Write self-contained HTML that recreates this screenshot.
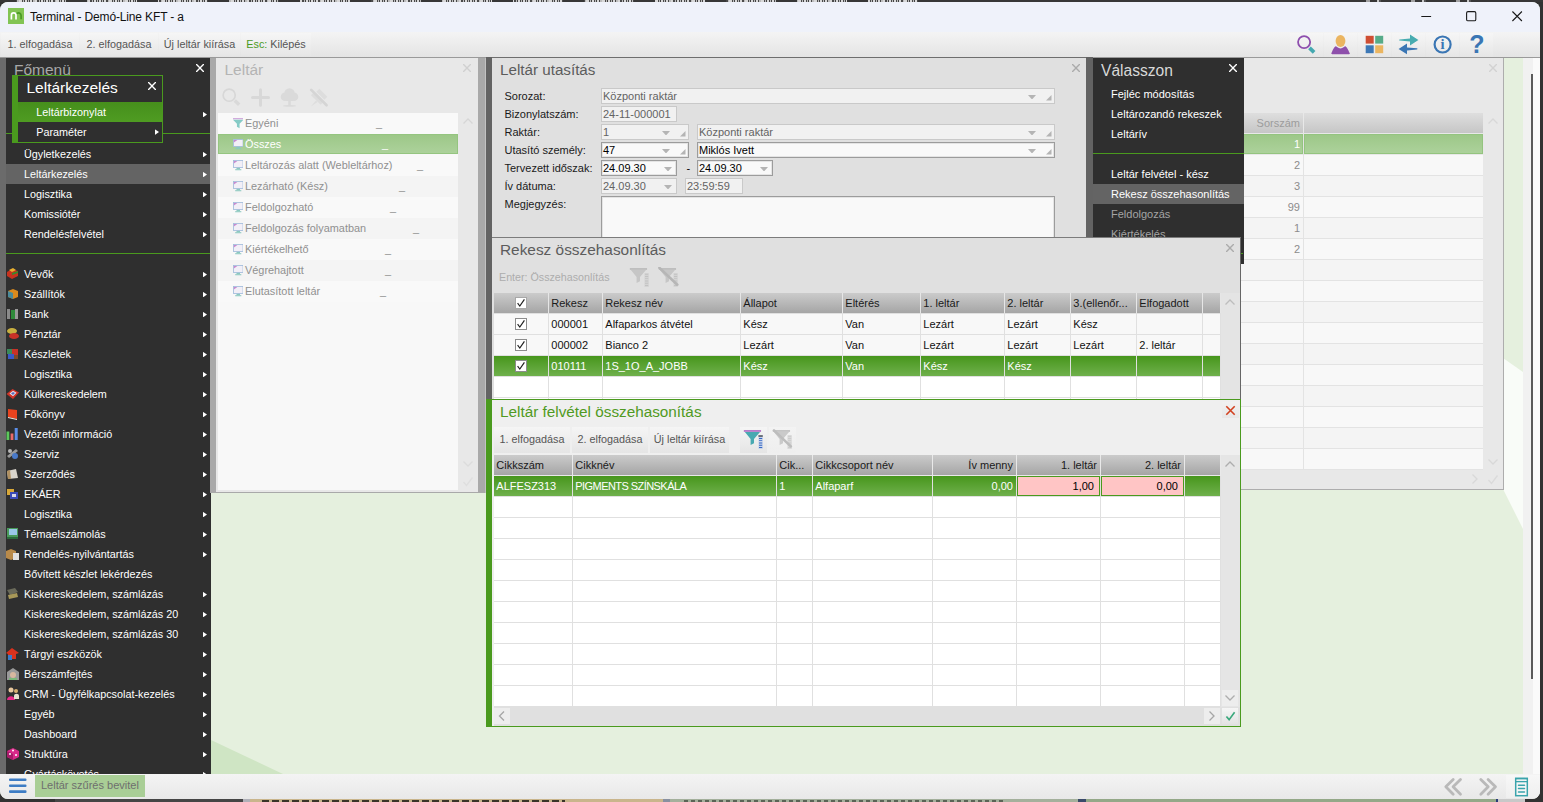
<!DOCTYPE html>
<html lang="hu"><head><meta charset="utf-8"><title>Terminal - Demó-Line KFT - a</title>
<style>
*{box-sizing:border-box;margin:0;padding:0}
html,body{width:1543px;height:802px;overflow:hidden;background:#323232}
body{font-family:"Liberation Sans",Arial,sans-serif;font-size:11px;color:#000;position:relative}
.a{position:absolute}
#win{position:absolute;left:0;top:2px;width:1540px;height:796.800px;border-radius:8px;overflow:hidden;background:#e5f0de}
#m{position:absolute;left:0;top:-2px;width:1543px;height:802px}
#title{left:0;top:2px;width:1540px;height:30px;background:#eff2fa}
#title .t{left:30px;top:7px;font-size:12px;letter-spacing:-0.14px;color:#111;white-space:nowrap;line-height:16px}
#tb{left:0;top:32px;width:1540px;height:25px;background:linear-gradient(#f4f4f4,#e4e4e4)}
#tbline{left:0;top:57px;width:1540px;height:1px;background:#9a9a9a}
.tbtn{position:absolute;top:1px;height:23px;line-height:23px;font-size:10.8px;color:#555;background:linear-gradient(#f6f6f6,#e6e6e6);text-align:center;white-space:nowrap}
.tbtn b{font-weight:normal;color:#4a9a1e}
.mi{position:absolute;left:6px;width:204px;height:20px;line-height:20px;font-size:10.8px;color:#fff;padding-left:18px;white-space:nowrap}
.mi:after{content:"";position:absolute;right:3px;top:7.7px;width:4.2px;height:5.8px;background:#fff;clip-path:polygon(0 0,100% 50%,0 100%)}
.mi.na:after{display:none}
.mi.hl{background:#646464}
.pt{position:absolute;font-size:15.5px;white-space:nowrap;line-height:18px}
.x{position:absolute;width:8.8px;height:8.8px;margin:0.1px;background:currentColor;clip-path:polygon(11% 0,50% 39%,89% 0,100% 11%,61% 50%,100% 89%,89% 100%,50% 61%,11% 100%,0 89%,39% 50%,0 11%)}
</style></head><body>
<div class="a" style="left:0;top:0;width:1543px;height:2px;background:#373737"></div>
<div class="a" style="left:14px;top:0.300px;width:920px;height:1.700px;background:repeating-linear-gradient(90deg,#373737 0,#373737 2px,transparent 2px,transparent 52px,#373737 52px,#373737 71px),repeating-linear-gradient(90deg,#d8d8d8 0,#d8d8d8 2.200px,#4a4a4a 2.200px,#4a4a4a 3.400px,#bcbcbc 3.400px,#bcbcbc 4.600px,#444 4.600px,#444 5.300px)"></div>
<div class="a" style="left:1336px;top:0.300px;width:160px;height:1.700px;background:repeating-linear-gradient(90deg,#373737 0,#373737 30px,#a0a0a0 30px,#a0a0a0 34px,#373737 34px,#373737 41px,#c8c8c8 41px,#c8c8c8 43px,#555 43px,#555 45px)"></div>
<div class="a" style="left:55px;top:798px;width:188px;height:4px;background:#454545"></div>
<div class="a" style="left:243px;top:798px;width:7px;height:4px;background:#b0b0b8"></div>
<div class="a" style="left:250px;top:798px;width:413px;height:4px;background:#c9b58c"></div>
<div class="a" style="left:262px;top:799.5px;width:303px;height:2.5px;background:repeating-linear-gradient(90deg,#3a3428 0,#3a3428 7px,#c9b58c 7px,#c9b58c 10px)"></div>
<div class="a" style="left:663px;top:798px;width:7px;height:4px;background:#8890a0"></div>
<div class="a" style="left:670px;top:798px;width:408px;height:4px;background:#a4b09c"></div>
<div class="a" style="left:684px;top:800px;width:320px;height:2px;background:repeating-linear-gradient(90deg,#5a6456 0,#5a6456 4px,#a4b09c 4px,#a4b09c 7px)"></div>
<div class="a" style="left:1078px;top:798px;width:8px;height:4px;background:#3a4a6a"></div>
<div class="a" style="left:1086px;top:798px;width:410px;height:4px;background:#94a888"></div>
<div class="a" style="left:1496px;top:798px;width:1.500px;height:4px;background:#2a3a7a"></div>
<div class="a" style="left:1497.500px;top:798px;width:27px;height:4px;background:#c8c8c8"></div>
<div id="win"><div id="m">
<div id="title" class="a"><div class="a t">Terminal - Demó-Line KFT - a</div></div>
<div id="tb" class="a">
<div class="tbtn" style="left:1px;width:78px">1. elfogadása</div>
<div class="tbtn" style="left:80px;width:78px">2. elfogadása</div>
<div class="tbtn" style="left:159px;width:81px">Új leltár kiírása</div>
<div class="tbtn" style="left:241px;width:70px"><b>Esc:</b> Kilépés</div>
</div>
<div class="a" style="left:1290px;top:33px;width:33px;height:23.500px;background:linear-gradient(#f6f6f6,#e6e6e6)"></div>
<div class="a" style="left:1324px;top:33px;width:33px;height:23.500px;background:linear-gradient(#f6f6f6,#e6e6e6)"></div>
<div class="a" style="left:1358px;top:33px;width:33px;height:23.500px;background:linear-gradient(#f6f6f6,#e6e6e6)"></div>
<div class="a" style="left:1392px;top:33px;width:33px;height:23.500px;background:linear-gradient(#f6f6f6,#e6e6e6)"></div>
<div class="a" style="left:1426px;top:33px;width:33px;height:23.500px;background:linear-gradient(#f6f6f6,#e6e6e6)"></div>
<div class="a" style="left:1460px;top:33px;width:33px;height:23.500px;background:linear-gradient(#f6f6f6,#e6e6e6)"></div>
<svg class="a" style="left:1290px;top:33px" width="33" height="24" viewBox="1290 33 33 24"><circle cx="1304.100" cy="42.100" r="6.050" fill="none" stroke="#8e4fae" stroke-width="1.800"/><path d="M1309.500 47.800l4.600 4.500" stroke="#44a8b0" stroke-width="3.800" stroke-linecap="butt"/><path d="M1309.100 46.800l5.900 5.500-2.500 2.600-5.500-5.900z" fill="#44a8b0" opacity="0"/></svg>
<svg class="a" style="left:1324px;top:33px" width="33" height="24" viewBox="1324 33 33 24"><path d="M1331.300 53.600c0.300-1.200 2.200-6 4.200-7.400 1 0 2.500 2.200 5 2.200s4-2.200 5-2.200c2 1.400 3.900 6.200 4.400 7.400-0.200 0.400-0.500 0.600-0.900 0.600h-16.800c-0.400 0-0.800-0.200-0.900-0.600z" fill="#8e50ab"/><ellipse cx="1340.500" cy="41" rx="4.900" ry="6.050" fill="#ebb560"/></svg>
<svg class="a" style="left:1358px;top:33px" width="33" height="24" viewBox="1358 33 33 24"><rect x="1365.700" y="35.800" width="8" height="7.800" fill="#cf4e32"/><rect x="1375.200" y="35.800" width="8" height="7.800" fill="#56ab88"/><rect x="1365.700" y="45.300" width="8" height="7.900" fill="#3d78b6"/><rect x="1375.200" y="45.300" width="8" height="7.900" fill="#ebb560"/></svg>
<svg class="a" style="left:1392px;top:33px" width="33" height="24" viewBox="1392 33 33 24"><path d="M1399.600 39.400l10.400-0.900v-3.900l8.400 5.400-8.400 5.400v-3.900l-10.400-0.900c-0.600-0.300-0.600-0.900 0-1.200z" fill="#48acb0"/><path d="M1417 48.300l-10 -0.900v-3.900l-8.400 5.400 8.400 5.400v-3.900l10-0.900c0.600-0.300 0.600-0.900 0-1.200z" fill="#3a76b4"/></svg>
<svg class="a" style="left:1426px;top:33px" width="33" height="24" viewBox="1426 33 33 24"><circle cx="1442.600" cy="44.500" r="8" fill="none" stroke="#3a76b4" stroke-width="2.200"/><text x="1442.600" y="49.300" text-anchor="middle" font-family="Liberation Serif, serif" font-weight="bold" font-size="14.500" fill="#3a76b4">i</text></svg>
<svg class="a" style="left:1460px;top:33px" width="33" height="24" viewBox="1460 33 33 24"><text transform="translate(1476.800 53.400) scale(1 1)" text-anchor="middle" font-family="Liberation Sans, sans-serif" font-weight="bold" font-size="25" fill="#3a76b4">?</text></svg>
<svg class="a" style="left:8px;top:8px" width="16" height="16" viewBox="0 0 16 16"><rect width="16" height="16" fill="#82c454"/><path d="M3.400 11.500v-4.300c0-3 4.600-3 4.600 0v4.300" fill="none" stroke="#fff" stroke-width="1.700"/><path d="M8.700 5.600c2.400-1.600 4.400-0.300 4.400 2v3.600" fill="none" stroke="#4a9a24" stroke-width="1.700"/></svg>
<svg class="a" style="left:1415px;top:6px" width="115" height="22" viewBox="1415 6 115 22" fill="none" stroke="#1a1a1a" stroke-width="1.100"><path d="M1421.300 16.500h9.800"/><rect x="1466.600" y="11.600" width="9.200" height="9.200" rx="1.400"/><path d="M1512.400 11.500l9.500 9.500M1521.900 11.500l-9.500 9.500"/></svg>
<div id="tbline" class="a"></div>
<svg class="a" style="left:0;top:58px" width="1540" height="716" viewBox="0 58 1540 716"><path d="M211 740v34h72z" fill="#cfe5c4"/><path d="M1503 358l20 14v157l-20-40z" fill="#f9fcf8"/></svg>
<div class="a" style="left:1523px;top:58px;width:17px;height:716px;background:#f1f1f1"></div>
<div class="a" style="left:1533px;top:58px;width:7px;height:716px;background:#fafafa"></div>
<div class="a" style="left:1531px;top:74px;width:2px;height:605px;background:#5a5a5a"></div>
<div class="a" style="left:1236px;top:58px;width:268px;height:431.5px;background:#e8e8e8;border-right:1px solid #adadad;border-bottom:1px solid #adadad;overflow:hidden">
<div class="x" style="left:252.5px;top:5.5px;color:#d2d2d2"></div>
<div class="a" style="left:0px;top:55px;width:67px;height:20px;background:linear-gradient(#dedede,#c6c6c6);line-height:20px;text-align:right;padding-right:3px;color:#9c9c9c">Sorszám</div>
<div class="a" style="left:68px;top:55px;width:179px;height:20px;background:linear-gradient(#dedede,#c6c6c6)"></div>
<div class="a" style="left:0px;top:76px;width:67px;height:20px;background:linear-gradient(#9cc787,#add29c);color:#fff;box-shadow:inset 0 0 0 1px #94c47f;line-height:20px;text-align:right;padding-right:3px">1</div>
<div class="a" style="left:68px;top:76px;width:179px;height:20px;background:linear-gradient(#9cc787,#add29c);color:#fff;box-shadow:inset 0 0 0 1px #94c47f"></div>
<div class="a" style="left:0px;top:97px;width:67px;height:21px;background:#f8f8f8;color:#8c8c8c;border-bottom:1px solid #e3e3e3;line-height:21px;text-align:right;padding-right:3px">2</div>
<div class="a" style="left:68px;top:97px;width:179px;height:21px;background:#f8f8f8;color:#8c8c8c;border-bottom:1px solid #e3e3e3"></div>
<div class="a" style="left:0px;top:118px;width:67px;height:21px;background:#f4f4f4;color:#8c8c8c;border-bottom:1px solid #e3e3e3;line-height:21px;text-align:right;padding-right:3px">3</div>
<div class="a" style="left:68px;top:118px;width:179px;height:21px;background:#f4f4f4;color:#8c8c8c;border-bottom:1px solid #e3e3e3"></div>
<div class="a" style="left:0px;top:139px;width:67px;height:21px;background:#f8f8f8;color:#8c8c8c;border-bottom:1px solid #e3e3e3;line-height:21px;text-align:right;padding-right:3px">99</div>
<div class="a" style="left:68px;top:139px;width:179px;height:21px;background:#f8f8f8;color:#8c8c8c;border-bottom:1px solid #e3e3e3"></div>
<div class="a" style="left:0px;top:160px;width:67px;height:21px;background:#f4f4f4;color:#8c8c8c;border-bottom:1px solid #e3e3e3;line-height:21px;text-align:right;padding-right:3px">1</div>
<div class="a" style="left:68px;top:160px;width:179px;height:21px;background:#f4f4f4;color:#8c8c8c;border-bottom:1px solid #e3e3e3"></div>
<div class="a" style="left:0px;top:181px;width:67px;height:21px;background:#f8f8f8;color:#8c8c8c;border-bottom:1px solid #e3e3e3;line-height:21px;text-align:right;padding-right:3px">2</div>
<div class="a" style="left:68px;top:181px;width:179px;height:21px;background:#f8f8f8;color:#8c8c8c;border-bottom:1px solid #e3e3e3"></div>
<div class="a" style="left:0px;top:202px;width:67px;height:21px;background:#f4f4f4;color:#8c8c8c;border-bottom:1px solid #e3e3e3;line-height:21px;text-align:right;padding-right:3px"></div>
<div class="a" style="left:68px;top:202px;width:179px;height:21px;background:#f4f4f4;color:#8c8c8c;border-bottom:1px solid #e3e3e3"></div>
<div class="a" style="left:0px;top:223px;width:67px;height:21px;background:#f8f8f8;color:#8c8c8c;border-bottom:1px solid #e3e3e3;line-height:21px;text-align:right;padding-right:3px"></div>
<div class="a" style="left:68px;top:223px;width:179px;height:21px;background:#f8f8f8;color:#8c8c8c;border-bottom:1px solid #e3e3e3"></div>
<div class="a" style="left:0px;top:244px;width:67px;height:21px;background:#f4f4f4;color:#8c8c8c;border-bottom:1px solid #e3e3e3;line-height:21px;text-align:right;padding-right:3px"></div>
<div class="a" style="left:68px;top:244px;width:179px;height:21px;background:#f4f4f4;color:#8c8c8c;border-bottom:1px solid #e3e3e3"></div>
<div class="a" style="left:0px;top:265px;width:67px;height:21px;background:#f8f8f8;color:#8c8c8c;border-bottom:1px solid #e3e3e3;line-height:21px;text-align:right;padding-right:3px"></div>
<div class="a" style="left:68px;top:265px;width:179px;height:21px;background:#f8f8f8;color:#8c8c8c;border-bottom:1px solid #e3e3e3"></div>
<div class="a" style="left:0px;top:286px;width:67px;height:21px;background:#f4f4f4;color:#8c8c8c;border-bottom:1px solid #e3e3e3;line-height:21px;text-align:right;padding-right:3px"></div>
<div class="a" style="left:68px;top:286px;width:179px;height:21px;background:#f4f4f4;color:#8c8c8c;border-bottom:1px solid #e3e3e3"></div>
<div class="a" style="left:0px;top:307px;width:67px;height:21px;background:#f8f8f8;color:#8c8c8c;border-bottom:1px solid #e3e3e3;line-height:21px;text-align:right;padding-right:3px"></div>
<div class="a" style="left:68px;top:307px;width:179px;height:21px;background:#f8f8f8;color:#8c8c8c;border-bottom:1px solid #e3e3e3"></div>
<div class="a" style="left:0px;top:328px;width:67px;height:21px;background:#f4f4f4;color:#8c8c8c;border-bottom:1px solid #e3e3e3;line-height:21px;text-align:right;padding-right:3px"></div>
<div class="a" style="left:68px;top:328px;width:179px;height:21px;background:#f4f4f4;color:#8c8c8c;border-bottom:1px solid #e3e3e3"></div>
<div class="a" style="left:0px;top:349px;width:67px;height:21px;background:#f8f8f8;color:#8c8c8c;border-bottom:1px solid #e3e3e3;line-height:21px;text-align:right;padding-right:3px"></div>
<div class="a" style="left:68px;top:349px;width:179px;height:21px;background:#f8f8f8;color:#8c8c8c;border-bottom:1px solid #e3e3e3"></div>
<div class="a" style="left:0px;top:370px;width:67px;height:21px;background:#f4f4f4;color:#8c8c8c;border-bottom:1px solid #e3e3e3;line-height:21px;text-align:right;padding-right:3px"></div>
<div class="a" style="left:68px;top:370px;width:179px;height:21px;background:#f4f4f4;color:#8c8c8c;border-bottom:1px solid #e3e3e3"></div>
<div class="a" style="left:0px;top:391px;width:67px;height:21px;background:#f8f8f8;color:#8c8c8c;border-bottom:1px solid #e3e3e3;line-height:21px;text-align:right;padding-right:3px"></div>
<div class="a" style="left:68px;top:391px;width:179px;height:21px;background:#f8f8f8;color:#8c8c8c;border-bottom:1px solid #e3e3e3"></div>
<div class="a" style="left:67px;top:76px;width:1px;height:336px;background:#e3e3e3"></div>
<svg class="a" style="left:251px;top:59px" width="12" height="8" viewBox="0 0 12 8"><path d="M1.500 6.500l4.500-4.500 4.500 4.500" fill="none" stroke="#d8d8d8" stroke-width="1.300"/></svg>
<svg class="a" style="left:251px;top:399.5px" width="12" height="8" viewBox="0 0 12 8"><path d="M1.500 1.500l4.500 4.500 4.500-4.500" fill="none" stroke="#d8d8d8" stroke-width="1.300"/></svg>
<svg class="a" style="left:235px;top:415px" width="8" height="12" viewBox="0 0 8 12"><path d="M1.500 1.500l4.500 4.500-4.500 4.500" fill="none" stroke="#d8d8d8" stroke-width="1.300"/></svg>
<svg class="a" style="left:251px;top:415.5px" width="12" height="11" viewBox="0 0 12 11"><path d="M1.500 6l3 3.500 6-8" fill="none" stroke="#dadada" stroke-width="1.300"/></svg>
</div>
<div class="a" style="left:478px;top:58px;width:7px;height:434.500px;background:#a9a9a9"></div>
<div class="a" style="left:485px;top:58px;width:1.200px;height:434.500px;background:#c2c2c2"></div>
<div class="a" style="left:210px;top:58px;width:6px;height:434.5px;background:#a8a8a8"></div>
<div class="a" style="left:216px;top:58px;width:262px;height:434.5px;background:#e8e8e8;border-bottom:1px solid #a9a9a9">
<div class="pt" style="left:8.5px;top:3px;color:#b4b4b4">Leltár</div>
<div class="x" style="left:246.5px;top:5.5px;color:#d0d0d0"></div>
<svg class="a" style="left:5px;top:28px" width="110" height="24" viewBox="221 86 110 24"><circle cx="229.200" cy="95.200" r="6.050" fill="none" stroke="#d7d7d7" stroke-width="1.700"/><path d="M234.700 100.500l4.500 4.300" stroke="#d9d9d9" stroke-width="3.400"/><path d="M252.500 97.500h16M260.500 89.700v15.600" stroke="#d8d8d8" stroke-width="3" stroke-linecap="round"/><g fill="#dadada"><circle cx="289.500" cy="93.500" r="5.300"/><circle cx="285" cy="96.800" r="4.300"/><circle cx="294" cy="96.800" r="4.300"/><rect x="286" y="96" width="7" height="5"/><rect x="288.200" y="100" width="2.600" height="5.600"/><ellipse cx="289.500" cy="105.900" rx="6.500" ry="0.900"/></g><g fill="#dddddd"><path d="M319.300 88.800l8 8-3 3-8-8z"/><path d="M311 95.200l2.600-2.600 9.600 9.600-2.600 2.600z"/><path d="M316 100.400l1.600 1.600-6.800 4.600z"/></g><path d="M311.200 89.900l15.400 15.400" stroke="#d5d5d5" stroke-width="2.700" stroke-linecap="round"/></svg>
<div class="a" style="left:2px;top:55px;width:240px;height:377px;background:#f8f8f8">
<div class="a" style="left:0;top:0px;width:240px;height:21px;line-height:20px;font-size:10.9px;padding-left:27px;white-space:nowrap;background:#f9f9f9;color:#909090"><svg class="a" style="left:14.5px;top:5px" width="10.5" height="10.6" viewBox="0 0 12 13" preserveAspectRatio="none"><rect x="0" y="0" width="12" height="1.6" fill="#d2abdc"/><path d="M0 2.2h12l-4.5 5v5.3l-3-1.8v-3.5z" fill="#86cbc6"/></svg>Egyéni<span class="a" style="left:158px;top:0">_</span></div>
<div class="a" style="left:0;top:21px;width:240px;height:20px;line-height:20px;font-size:10.9px;padding-left:27px;white-space:nowrap;background:linear-gradient(#9cc787,#add29c);color:#fff;box-shadow:inset 0 0 0 1px #95c580"><svg class="a" style="left:14.5px;top:5px" width="10.5" height="10.5" viewBox="0 0 12 12"><rect x="0.5" y="0.5" width="11" height="8" fill="#f2eff7" stroke="#a4bedc"/><path d="M1 1h4l-4 3z" fill="#c78ad0"/><rect x="4" y="9" width="4" height="1.5" fill="#8cc8c0"/><rect x="2.5" y="10.5" width="7" height="1.2" fill="#8cc8c0"/></svg>Összes<span class="a" style="left:164px;top:0">_</span></div>
<div class="a" style="left:0;top:42px;width:240px;height:21px;line-height:20px;font-size:10.9px;padding-left:27px;white-space:nowrap;background:#f9f9f9;color:#909090"><svg class="a" style="left:14.5px;top:5px" width="10.5" height="10.5" viewBox="0 0 12 12"><rect x="0.5" y="0.5" width="11" height="8" fill="#f2eff7" stroke="#a4bedc"/><path d="M1 1h4l-4 3z" fill="#c78ad0"/><rect x="4" y="9" width="4" height="1.5" fill="#8cc8c0"/><rect x="2.5" y="10.5" width="7" height="1.2" fill="#8cc8c0"/></svg>Leltározás alatt (Webleltárhoz)<span class="a" style="left:199px;top:0">_</span></div>
<div class="a" style="left:0;top:63px;width:240px;height:21px;line-height:20px;font-size:10.9px;padding-left:27px;white-space:nowrap;background:#f4f4f4;color:#909090"><svg class="a" style="left:14.5px;top:5px" width="10.5" height="10.5" viewBox="0 0 12 12"><rect x="0.5" y="0.5" width="11" height="8" fill="#f2eff7" stroke="#a4bedc"/><path d="M1 1h4l-4 3z" fill="#c78ad0"/><rect x="4" y="9" width="4" height="1.5" fill="#8cc8c0"/><rect x="2.5" y="10.5" width="7" height="1.2" fill="#8cc8c0"/></svg>Lezárható (Kész)<span class="a" style="left:181px;top:0">_</span></div>
<div class="a" style="left:0;top:84px;width:240px;height:21px;line-height:20px;font-size:10.9px;padding-left:27px;white-space:nowrap;background:#f9f9f9;color:#909090"><svg class="a" style="left:14.5px;top:5px" width="10.5" height="10.5" viewBox="0 0 12 12"><rect x="0.5" y="0.5" width="11" height="8" fill="#f2eff7" stroke="#a4bedc"/><path d="M1 1h4l-4 3z" fill="#c78ad0"/><rect x="4" y="9" width="4" height="1.5" fill="#8cc8c0"/><rect x="2.5" y="10.5" width="7" height="1.2" fill="#8cc8c0"/></svg>Feldolgozható<span class="a" style="left:172px;top:0">_</span></div>
<div class="a" style="left:0;top:105px;width:240px;height:21px;line-height:20px;font-size:10.9px;padding-left:27px;white-space:nowrap;background:#f4f4f4;color:#909090"><svg class="a" style="left:14.5px;top:5px" width="10.5" height="10.5" viewBox="0 0 12 12"><rect x="0.5" y="0.5" width="11" height="8" fill="#f2eff7" stroke="#a4bedc"/><path d="M1 1h4l-4 3z" fill="#c78ad0"/><rect x="4" y="9" width="4" height="1.5" fill="#8cc8c0"/><rect x="2.5" y="10.5" width="7" height="1.2" fill="#8cc8c0"/></svg>Feldolgozás folyamatban<span class="a" style="left:195px;top:0">_</span></div>
<div class="a" style="left:0;top:126px;width:240px;height:21px;line-height:20px;font-size:10.9px;padding-left:27px;white-space:nowrap;background:#f9f9f9;color:#909090"><svg class="a" style="left:14.5px;top:5px" width="10.5" height="10.5" viewBox="0 0 12 12"><rect x="0.5" y="0.5" width="11" height="8" fill="#f2eff7" stroke="#a4bedc"/><path d="M1 1h4l-4 3z" fill="#c78ad0"/><rect x="4" y="9" width="4" height="1.5" fill="#8cc8c0"/><rect x="2.5" y="10.5" width="7" height="1.2" fill="#8cc8c0"/></svg>Kiértékelhető<span class="a" style="left:167px;top:0">_</span></div>
<div class="a" style="left:0;top:147px;width:240px;height:21px;line-height:20px;font-size:10.9px;padding-left:27px;white-space:nowrap;background:#f4f4f4;color:#909090"><svg class="a" style="left:14.5px;top:5px" width="10.5" height="10.5" viewBox="0 0 12 12"><rect x="0.5" y="0.5" width="11" height="8" fill="#f2eff7" stroke="#a4bedc"/><path d="M1 1h4l-4 3z" fill="#c78ad0"/><rect x="4" y="9" width="4" height="1.5" fill="#8cc8c0"/><rect x="2.5" y="10.5" width="7" height="1.2" fill="#8cc8c0"/></svg>Végrehajtott<span class="a" style="left:167px;top:0">_</span></div>
<div class="a" style="left:0;top:168px;width:240px;height:21px;line-height:20px;font-size:10.9px;padding-left:27px;white-space:nowrap;background:#f9f9f9;color:#909090"><svg class="a" style="left:14.5px;top:5px" width="10.5" height="10.5" viewBox="0 0 12 12"><rect x="0.5" y="0.5" width="11" height="8" fill="#f2eff7" stroke="#a4bedc"/><path d="M1 1h4l-4 3z" fill="#c78ad0"/><rect x="4" y="9" width="4" height="1.5" fill="#8cc8c0"/><rect x="2.5" y="10.5" width="7" height="1.2" fill="#8cc8c0"/></svg>Elutasított leltár<span class="a" style="left:162px;top:0">_</span></div>
</div>
<svg class="a" style="left:246px;top:58.5px" width="12" height="8" viewBox="0 0 12 8"><path d="M1.500 6.500l4.500-4.500 4.500 4.500" fill="none" stroke="#d6d6d6" stroke-width="1.300"/></svg>
<svg class="a" style="left:246px;top:402px" width="12" height="8" viewBox="0 0 12 8"><path d="M1.500 1.500l4.500 4.500 4.500-4.500" fill="none" stroke="#dcdcdc" stroke-width="1.300"/></svg>
<svg class="a" style="left:246px;top:418px" width="12" height="11" viewBox="0 0 12 11"><path d="M1.500 6l3 3.500 6-8" fill="none" stroke="#dedede" stroke-width="1.300"/></svg>
</div>
<div class="a" style="left:0;top:58px;width:6px;height:716px;background:#6b6b6b"></div>
<div class="a" style="left:6px;top:58px;width:205px;height:716px;background:#2f2f2f;overflow:hidden">
<div class="a" style="left:-6px;top:-58px;width:217px;height:802px">
<div class="pt" style="left:14px;top:61px;color:#a8a8a8">Főmenü</div>
<div class="x" style="left:195.5px;top:63.5px;color:#fff"></div>
<div class="mi" style="top:104px"></div>
<div class="a" style="left:6px;top:133px;width:205px;height:1px;background:#4a9a1e"></div>
<div class="a" style="left:6px;top:253px;width:205px;height:1px;background:#4a9a1e"></div>
<div class="mi" style="top:144px">Ügyletkezelés</div>
<div class="mi hl" style="top:164px">Leltárkezelés</div>
<div class="mi" style="top:184px">Logisztika</div>
<div class="mi" style="top:204px">Komissiótér</div>
<div class="mi" style="top:224px">Rendelésfelvétel</div>
<div class="mi" style="top:264px"><svg class="a" style="left:0;top:3px" width="13" height="14" viewBox="0 0 13 14"><path d="M1 5l5-3 6 2v5l-6 3-5-3z" fill="#c8321e"/><path d="M3 3l4-2 3 2-4 2z" fill="#e8b030"/><path d="M6 6l6-2v2l-6 2z" fill="#3a8a2a"/></svg>Vevők</div>
<div class="mi" style="top:284px"><svg class="a" style="left:0;top:3px" width="13" height="14" viewBox="0 0 13 14"><path d="M2 4l5-2 5 2v6l-5 2-5-2z" fill="#d98a1e"/><path d="M2 4l5 2v6l-5-2z" fill="#4a8a9a"/></svg>Szállítók</div>
<div class="mi" style="top:304px"><svg class="a" style="left:0;top:3px" width="13" height="14" viewBox="0 0 13 14"><rect x="1" y="2" width="3" height="10" fill="#8a8a8a"/><rect x="5" y="3" width="7" height="9" fill="#2e8a3a"/><rect x="9" y="2" width="3" height="10" fill="#9a9a9a"/></svg>Bank</div>
<div class="mi" style="top:324px"><svg class="a" style="left:0;top:3px" width="13" height="14" viewBox="0 0 13 14"><ellipse cx="6" cy="4" rx="5" ry="3" fill="#c8b040"/><ellipse cx="8" cy="9" rx="5" ry="3" fill="#c83228"/></svg>Pénztár</div>
<div class="mi" style="top:344px"><svg class="a" style="left:0;top:3px" width="13" height="14" viewBox="0 0 13 14"><rect x="1" y="2" width="5" height="5" fill="#3a8a5a"/><rect x="6" y="2" width="6" height="6" fill="#c83228"/><rect x="2" y="7" width="6" height="5" fill="#3a5ac8"/><rect x="8" y="8" width="4" height="4" fill="#7a4a2a"/></svg>Készletek</div>
<div class="mi" style="top:364px">Logisztika</div>
<div class="mi" style="top:384px"><svg class="a" style="left:0;top:3px" width="13" height="14" viewBox="0 0 13 14"><path d="M0.500 7l6-5 6.500 3.500-6 6.500z" fill="#d03428"/><path d="M3.500 6.500l3.500-2.700 3.500 2-3.500 3.500z" fill="#dfe3f0"/><path d="M5 6.500l2-1.500 2 1-2 2z" fill="#5a6ab8"/></svg>Külkereskedelem</div>
<div class="mi" style="top:404px"><svg class="a" style="left:0;top:3px" width="13" height="14" viewBox="0 0 13 14"><path d="M2 2l9 1v9l-9-2z" fill="#e8431e"/><path d="M2 10l9 2v1l-9-2z" fill="#f0e8e0"/></svg>Főkönyv</div>
<div class="mi" style="top:424px"><svg class="a" style="left:0;top:3px" width="13" height="14" viewBox="0 0 13 14"><rect x="0.500" y="4.500" width="2.800" height="8.500" fill="#5cc85c"/><rect x="4.600" y="6.500" width="2.800" height="6.500" fill="#e86a6a"/><rect x="8.700" y="1" width="3" height="12" fill="#5a8ee8"/></svg>Vezetői információ</div>
<div class="mi" style="top:444px"><svg class="a" style="left:0;top:3px" width="13" height="14" viewBox="0 0 13 14"><path d="M1 9l9-7 2 2-9 7z" fill="#9a9a9a"/><circle cx="9" cy="9" r="3" fill="#4a7ac8"/><circle cx="4" cy="4" r="2" fill="#b8b8b8"/></svg>Szerviz</div>
<div class="mi" style="top:464px"><svg class="a" style="left:0;top:3px" width="13" height="14" viewBox="0 0 13 14"><path d="M1 4l9-2 2 9-10 1z" fill="#d8d4cc"/><path d="M1 4l3-1 1 9-3 0z" fill="#b09060"/></svg>Szerződés</div>
<div class="mi" style="top:484px"><svg class="a" style="left:0;top:3px" width="13" height="14" viewBox="0 0 13 14"><rect x="1" y="2" width="7" height="6" fill="#d8a838"/><rect x="4" y="5" width="8" height="7" fill="#3a4ab8"/><rect x="6" y="7" width="4" height="3" fill="#d8d8e8"/></svg>EKÁER</div>
<div class="mi" style="top:504px">Logisztika</div>
<div class="mi" style="top:524px"><svg class="a" style="left:0;top:3px" width="13" height="14" viewBox="0 0 13 14"><rect x="1" y="1" width="11" height="11" fill="#4a9a5a"/><rect x="3" y="2" width="8" height="6" fill="#9ac8e8"/><rect x="1" y="10" width="11" height="2" fill="#2a6a3a"/></svg>Témaelszámolás</div>
<div class="mi" style="top:544px"><svg class="a" style="left:0;top:3px" width="13" height="14" viewBox="0 0 13 14"><path d="M0 4l5-2 5 2v7l-5 2-5-2z" fill="#b88a4a"/><rect x="7" y="6" width="6" height="7" fill="#e0e0e0"/></svg>Rendelés-nyilvántartás</div>
<div class="mi na" style="top:564px">Bővített készlet lekérdezés</div>
<div class="mi" style="top:584px"><svg class="a" style="left:0;top:3px" width="13" height="14" viewBox="0 0 13 14"><path d="M1 3l8-2 3 4-8 3z" fill="#6a6a5a"/><path d="M2 8l9-2 1 4-9 2z" fill="#a89858"/></svg>Kiskereskedelem, számlázás</div>
<div class="mi" style="top:604px">Kiskereskedelem, számlázás 20</div>
<div class="mi" style="top:624px">Kiskereskedelem, számlázás 30</div>
<div class="mi" style="top:644px"><svg class="a" style="left:0;top:3px" width="13" height="14" viewBox="0 0 13 14"><path d="M0 6l6-5 7 5-3 1v5h-8v-5z" fill="#d8321e"/><rect x="2" y="8" width="4" height="5" fill="#3a7ac8"/></svg>Tárgyi eszközök</div>
<div class="mi" style="top:664px"><svg class="a" style="left:0;top:3px" width="13" height="14" viewBox="0 0 13 14"><path d="M1 5l6-4 6 4v8h-12z" fill="#9a9a9a"/><circle cx="7" cy="8" r="3" fill="#d8b8a0"/><rect x="3" y="11" width="8" height="2" fill="#7ab87a"/></svg>Bérszámfejtés</div>
<div class="mi" style="top:684px"><svg class="a" style="left:0;top:3px" width="13" height="14" viewBox="0 0 13 14"><circle cx="5" cy="3" r="2.5" fill="#e8c8a0"/><path d="M1 13c0-5 8-5 8 0z" fill="#e82a8a"/><circle cx="10" cy="4" r="2" fill="#d8b070"/><path d="M8 9c0-3 5-3 5 0v3h-5z" fill="#e8e0d0"/></svg>CRM - Ügyfélkapcsolat-kezelés</div>
<div class="mi" style="top:704px">Egyéb</div>
<div class="mi" style="top:724px">Dashboard</div>
<div class="mi" style="top:744px"><svg class="a" style="left:0;top:3px" width="13" height="14" viewBox="0 0 13 14"><path d="M1 4l6-3 6 3v6l-6 3-6-3z" fill="#d82a8a"/><path d="M1 4l6 3v6l-6-3z" fill="#a81a6a"/><circle cx="4" cy="7" r="1" fill="#fff"/><circle cx="10" cy="8" r="1" fill="#fff"/><circle cx="7" cy="3.5" r="1" fill="#fff"/></svg>Struktúra</div>
<div class="mi" style="top:764px">Gyártáskövetés</div>
</div></div>
<div class="a" style="left:210px;top:58px;width:6px;height:434.500px;background:#a9a9a9"></div>
<div class="a" style="left:486px;top:57px;width:6px;height:343px;background:#636363"></div>
<div class="a" style="left:1086px;top:57px;width:7px;height:208px;background:#636363"></div>
<div class="a" style="left:492px;top:57px;width:594px;height:182px;background:#e0e0e0;border-top:1px solid #6e6e6e">
<div class="pt" style="left:8px;top:3px;color:#5c5c5c;font-size:15.2px">Leltár utasítás</div>
<div class="x" style="left:579.5px;top:5.5px;color:#ababab"></div>
<div class="a" style="left:12.5px;top:30px;height:16px;line-height:16px;white-space:nowrap;color:#1a1a1a">Sorozat:</div>
<div class="a" style="left:12.5px;top:48px;height:16px;line-height:16px;white-space:nowrap;color:#1a1a1a">Bizonylatszám:</div>
<div class="a" style="left:12.5px;top:66px;height:16px;line-height:16px;white-space:nowrap;color:#1a1a1a">Raktár:</div>
<div class="a" style="left:12.5px;top:84px;height:16px;line-height:16px;white-space:nowrap;color:#1a1a1a">Utasító személy:</div>
<div class="a" style="left:12.5px;top:102px;height:16px;line-height:16px;white-space:nowrap;color:#1a1a1a">Tervezett időszak:</div>
<div class="a" style="left:12.5px;top:120px;height:16px;line-height:16px;white-space:nowrap;color:#1a1a1a">Ív dátuma:</div>
<div class="a" style="left:12.5px;top:138px;height:16px;line-height:16px;white-space:nowrap;color:#1a1a1a">Megjegyzés:</div>
<div class="a" style="left:109px;top:30px;width:454px;height:16px;line-height:14px;padding-left:1px;white-space:nowrap;background:#f1f1f1;border:1px solid #c9c9c9;color:#636363">Központi raktár<svg class="a" style="right:18px;top:5.5px" width="8" height="4.500" viewBox="0 0 8 4.500"><path d="M0 0h8l-4 4.500z" fill="#b4b4b4"/></svg><svg class="a" style="right:2.500px;top:6px" width="5.500" height="5.500" viewBox="0 0 5.500 5.500"><path d="M5.500 0v5.500h-5.500z" fill="#b4b4b4"/></svg></div>
<div class="a" style="left:109px;top:48px;width:76px;height:16px;line-height:14px;padding-left:1px;white-space:nowrap;background:#f1f1f1;border:1px solid #c9c9c9;color:#636363">24-11-000001</div>
<div class="a" style="left:109px;top:66px;width:88px;height:16px;line-height:14px;padding-left:1px;white-space:nowrap;background:#f1f1f1;border:1px solid #c9c9c9;color:#636363">1<svg class="a" style="right:18px;top:5.5px" width="8" height="4.500" viewBox="0 0 8 4.500"><path d="M0 0h8l-4 4.500z" fill="#b4b4b4"/></svg><svg class="a" style="right:2.500px;top:6px" width="5.500" height="5.500" viewBox="0 0 5.500 5.500"><path d="M5.500 0v5.500h-5.500z" fill="#b4b4b4"/></svg></div>
<div class="a" style="left:205px;top:66px;width:358px;height:16px;line-height:14px;padding-left:1px;white-space:nowrap;background:#f1f1f1;border:1px solid #c9c9c9;color:#636363">Központi raktár<svg class="a" style="right:18px;top:5.5px" width="8" height="4.500" viewBox="0 0 8 4.500"><path d="M0 0h8l-4 4.500z" fill="#b4b4b4"/></svg><svg class="a" style="right:2.500px;top:6px" width="5.500" height="5.500" viewBox="0 0 5.500 5.500"><path d="M5.500 0v5.500h-5.500z" fill="#b4b4b4"/></svg></div>
<div class="a" style="left:109px;top:84px;width:88px;height:16px;line-height:14px;padding-left:1px;white-space:nowrap;background:#f9f9f9;border:1px solid #9c9c9c;color:#000;box-shadow:inset 0 0 0 1px #e4e4e4">47<svg class="a" style="right:18px;top:5.5px" width="8" height="4.500" viewBox="0 0 8 4.500"><path d="M0 0h8l-4 4.500z" fill="#b4b4b4"/></svg><svg class="a" style="right:2.500px;top:6px" width="5.500" height="5.500" viewBox="0 0 5.500 5.500"><path d="M5.500 0v5.500h-5.500z" fill="#b4b4b4"/></svg></div>
<div class="a" style="left:205px;top:84px;width:358px;height:16px;line-height:14px;padding-left:1px;white-space:nowrap;background:#f9f9f9;border:1px solid #9c9c9c;color:#000;box-shadow:inset 0 0 0 1px #e4e4e4">Miklós Ivett<svg class="a" style="right:18px;top:5.5px" width="8" height="4.500" viewBox="0 0 8 4.500"><path d="M0 0h8l-4 4.500z" fill="#b4b4b4"/></svg><svg class="a" style="right:2.500px;top:6px" width="5.500" height="5.500" viewBox="0 0 5.500 5.500"><path d="M5.500 0v5.500h-5.500z" fill="#b4b4b4"/></svg></div>
<div class="a" style="left:109px;top:102px;width:76px;height:16px;line-height:14px;padding-left:1px;white-space:nowrap;background:#f9f9f9;border:1px solid #9c9c9c;color:#000;box-shadow:inset 0 0 0 1px #e4e4e4">24.09.30<svg class="a" style="right:4.5px;top:5.5px" width="8" height="4.500" viewBox="0 0 8 4.500"><path d="M0 0h8l-4 4.500z" fill="#b4b4b4"/></svg></div>
<div class="a" style="left:194.5px;top:102px;line-height:16px">-</div>
<div class="a" style="left:205px;top:102px;width:76px;height:16px;line-height:14px;padding-left:1px;white-space:nowrap;background:#f9f9f9;border:1px solid #9c9c9c;color:#000;box-shadow:inset 0 0 0 1px #e4e4e4">24.09.30<svg class="a" style="right:4.5px;top:5.5px" width="8" height="4.500" viewBox="0 0 8 4.500"><path d="M0 0h8l-4 4.500z" fill="#b4b4b4"/></svg></div>
<div class="a" style="left:109px;top:120px;width:76px;height:16px;line-height:14px;padding-left:1px;white-space:nowrap;background:#f1f1f1;border:1px solid #c9c9c9;color:#636363">24.09.30<svg class="a" style="right:4.5px;top:5.5px" width="8" height="4.500" viewBox="0 0 8 4.500"><path d="M0 0h8l-4 4.500z" fill="#b4b4b4"/></svg></div>
<div class="a" style="left:193px;top:120px;width:58px;height:16px;line-height:14px;padding-left:1px;white-space:nowrap;background:#f1f1f1;border:1px solid #c9c9c9;color:#636363">23:59:59</div>
<div class="a" style="left:109px;top:138px;width:454px;height:60px;line-height:14px;padding-left:1px;white-space:nowrap;background:#f9f9f9;border:1px solid #9c9c9c;color:#000;box-shadow:inset 0 0 0 1px #e4e4e4"></div>
</div>
<div class="a" style="left:1093px;top:58px;width:151px;height:206px;background:#2f2f2f;overflow:hidden">
<div class="pt" style="left:8px;top:4px;color:#d8d8d8;font-size:15.6px">Válasszon</div>
<div class="x" style="left:135.5px;top:5.5px;color:#fff"></div>
<div class="a" style="left:0;top:26px;width:151px;height:20px;line-height:20px;padding-left:18px;white-space:nowrap;color:#fff;">Fejléc módosítás</div>
<div class="a" style="left:0;top:46px;width:151px;height:20px;line-height:20px;padding-left:18px;white-space:nowrap;color:#fff;">Leltározandó rekeszek</div>
<div class="a" style="left:0;top:66px;width:151px;height:20px;line-height:20px;padding-left:18px;white-space:nowrap;color:#fff;">Leltárív</div>
<div class="a" style="left:0;top:106px;width:151px;height:20px;line-height:20px;padding-left:18px;white-space:nowrap;color:#fff;">Leltár felvétel - kész</div>
<div class="a" style="left:0;top:126px;width:151px;height:20px;line-height:20px;padding-left:18px;white-space:nowrap;color:#fff;background:#646464">Rekesz összehasonlítás</div>
<div class="a" style="left:0;top:146px;width:151px;height:20px;line-height:20px;padding-left:18px;white-space:nowrap;color:#a4a4a4;">Feldolgozás</div>
<div class="a" style="left:0;top:166px;width:151px;height:20px;line-height:20px;padding-left:18px;white-space:nowrap;color:#a4a4a4;">Kiértékelés</div>
<div class="a" style="left:0;top:186px;width:151px;height:20px;line-height:20px;padding-left:18px;white-space:nowrap;color:#a4a4a4;">Lezárás</div>
<div class="a" style="left:0;top:95px;width:151px;height:1px;background:#4a9a1e"></div>
<div class="a" style="left:0;top:195px;width:150px;height:1px;background:#4a9a1e"></div>
</div>
<div class="a" style="left:492px;top:237px;width:749px;height:163px;background:#e0e0e0;border-top:1px solid #7c7c7c;border-right:1px solid #666;overflow:hidden">
<div class="pt" style="left:8px;top:3px;color:#5c5c5c;font-size:15.4px">Rekesz összehasonlítás</div>
<div class="x" style="left:733.5px;top:5.5px;color:#ababab"></div>
<div class="a" style="left:7px;top:30.7px;line-height:16px;color:#adadad;font-size:10.7px;white-space:nowrap">Enter: Összehasonlítás</div>
<svg class="a" style="left:137px;top:29px" width="21" height="21" viewBox="0 0 21 21"><rect x="0.85" y="1" width="17.200" height="1.900" fill="#bebebe"/><path d="M1.900 3.100h15.100l-6 7v4.200l-3.400 1.700v-5.900z" fill="#c6c6c6"/><rect x="15.400" y="6.200" width="4.400" height="13.800" fill="#d4d4d4"/><path d="M16 6.800h3.200v0.900h-3.200zM16 9h3.200v0.900h-3.200zM16 11.200h3.200v0.900h-3.200zM16 13.600h3.200v0.900h-3.200zM16 15.800h3.200v0.900h-3.200zM16 18h3.200v0.900h-3.200z" fill="#c2c2c2"/></svg>
<svg class="a" style="left:166.2px;top:29px" width="21" height="21" viewBox="0 0 21 21"><rect x="0.85" y="1" width="17.200" height="1.900" fill="#bebebe"/><path d="M1.900 3.100h15.100l-6 7v4.200l-3.400 1.700v-5.900z" fill="#c6c6c6"/><rect x="15.400" y="6.200" width="4.400" height="13.800" fill="#d4d4d4"/><path d="M16 6.800h3.200v0.900h-3.200zM16 9h3.200v0.900h-3.200zM16 11.200h3.200v0.900h-3.200zM16 13.600h3.200v0.900h-3.200zM16 15.800h3.200v0.900h-3.200zM16 18h3.200v0.900h-3.200z" fill="#c2c2c2"/><path d="M1.400 0.800l17.900 16.900" stroke="#b6b6b6" stroke-width="2.600" stroke-linecap="round"/></svg>
<div class="a" style="left:2px;top:55px;width:727px;height:20px;background:#e6e6e6"></div>
<div class="a" style="left:2px;top:75px;width:727px;height:90px;background:#e0e0e0"></div>
<div class="a" style="left:2px;top:55px;width:54px;height:20px;line-height:20px;background:linear-gradient(#cbcbcb,#a5a5a5);padding-left:2.3px;white-space:nowrap;overflow:hidden;color:#1a1a1a"></div>
<div class="a" style="left:57px;top:55px;width:53px;height:20px;line-height:20px;background:linear-gradient(#cbcbcb,#a5a5a5);padding-left:2.3px;white-space:nowrap;overflow:hidden;color:#1a1a1a">Rekesz</div>
<div class="a" style="left:111px;top:55px;width:137px;height:20px;line-height:20px;background:linear-gradient(#cbcbcb,#a5a5a5);padding-left:2.3px;white-space:nowrap;overflow:hidden;color:#1a1a1a">Rekesz név</div>
<div class="a" style="left:249px;top:55px;width:101px;height:20px;line-height:20px;background:linear-gradient(#cbcbcb,#a5a5a5);padding-left:2.3px;white-space:nowrap;overflow:hidden;color:#1a1a1a">Állapot</div>
<div class="a" style="left:351px;top:55px;width:77px;height:20px;line-height:20px;background:linear-gradient(#cbcbcb,#a5a5a5);padding-left:2.3px;white-space:nowrap;overflow:hidden;color:#1a1a1a">Eltérés</div>
<div class="a" style="left:429px;top:55px;width:83px;height:20px;line-height:20px;background:linear-gradient(#cbcbcb,#a5a5a5);padding-left:2.3px;white-space:nowrap;overflow:hidden;color:#1a1a1a">1. leltár</div>
<div class="a" style="left:513px;top:55px;width:65px;height:20px;line-height:20px;background:linear-gradient(#cbcbcb,#a5a5a5);padding-left:2.3px;white-space:nowrap;overflow:hidden;color:#1a1a1a">2. leltár</div>
<div class="a" style="left:579px;top:55px;width:65px;height:20px;line-height:20px;background:linear-gradient(#cbcbcb,#a5a5a5);padding-left:2.3px;white-space:nowrap;overflow:hidden;color:#1a1a1a">3.(ellenőr...</div>
<div class="a" style="left:645px;top:55px;width:65px;height:20px;line-height:20px;background:linear-gradient(#cbcbcb,#a5a5a5);padding-left:2.3px;white-space:nowrap;overflow:hidden;color:#1a1a1a">Elfogadott</div>
<div class="a" style="left:711px;top:55px;width:17px;height:20px;line-height:20px;background:linear-gradient(#cbcbcb,#a5a5a5);padding-left:2.3px;white-space:nowrap;overflow:hidden;color:#1a1a1a"></div>
<svg class="a" style="left:23px;top:59px" width="12" height="12" viewBox="0 0 12 12"><rect x="0.5" y="0.5" width="11" height="11" fill="#fff" stroke="#a8a8a8"/><path d="M2.600 6.200l2.200 2.800 4.600-6.600" fill="none" stroke="#222" stroke-width="1.200"/></svg>
<div class="a" style="left:2px;top:76px;width:54px;height:20px;line-height:20px;background:#f8f8f8;color:#111;padding-left:2.3px;white-space:nowrap;overflow:hidden"></div>
<div class="a" style="left:57px;top:76px;width:53px;height:20px;line-height:20px;background:#f8f8f8;color:#111;padding-left:2.3px;white-space:nowrap;overflow:hidden">000001</div>
<div class="a" style="left:111px;top:76px;width:137px;height:20px;line-height:20px;background:#f8f8f8;color:#111;padding-left:2.3px;white-space:nowrap;overflow:hidden">Alfaparkos átvétel</div>
<div class="a" style="left:249px;top:76px;width:101px;height:20px;line-height:20px;background:#f8f8f8;color:#111;padding-left:2.3px;white-space:nowrap;overflow:hidden">Kész</div>
<div class="a" style="left:351px;top:76px;width:77px;height:20px;line-height:20px;background:#f8f8f8;color:#111;padding-left:2.3px;white-space:nowrap;overflow:hidden">Van</div>
<div class="a" style="left:429px;top:76px;width:83px;height:20px;line-height:20px;background:#f8f8f8;color:#111;padding-left:2.3px;white-space:nowrap;overflow:hidden">Lezárt</div>
<div class="a" style="left:513px;top:76px;width:65px;height:20px;line-height:20px;background:#f8f8f8;color:#111;padding-left:2.3px;white-space:nowrap;overflow:hidden">Lezárt</div>
<div class="a" style="left:579px;top:76px;width:65px;height:20px;line-height:20px;background:#f8f8f8;color:#111;padding-left:2.3px;white-space:nowrap;overflow:hidden">Kész</div>
<div class="a" style="left:645px;top:76px;width:65px;height:20px;line-height:20px;background:#f8f8f8;color:#111;padding-left:2.3px;white-space:nowrap;overflow:hidden"></div>
<div class="a" style="left:711px;top:76px;width:17px;height:20px;line-height:20px;background:#f8f8f8;color:#111;padding-left:2.3px;white-space:nowrap;overflow:hidden"></div>
<svg class="a" style="left:23px;top:80px" width="12" height="12" viewBox="0 0 12 12"><rect x="0.5" y="0.5" width="11" height="11" fill="#fff" stroke="#8c8c8c"/><path d="M2.600 6.200l2.200 2.800 4.600-6.600" fill="none" stroke="#222" stroke-width="1.200"/></svg>
<div class="a" style="left:2px;top:97px;width:54px;height:20px;line-height:20px;background:#f8f8f8;color:#111;padding-left:2.3px;white-space:nowrap;overflow:hidden"></div>
<div class="a" style="left:57px;top:97px;width:53px;height:20px;line-height:20px;background:#f8f8f8;color:#111;padding-left:2.3px;white-space:nowrap;overflow:hidden">000002</div>
<div class="a" style="left:111px;top:97px;width:137px;height:20px;line-height:20px;background:#f8f8f8;color:#111;padding-left:2.3px;white-space:nowrap;overflow:hidden">Bianco 2</div>
<div class="a" style="left:249px;top:97px;width:101px;height:20px;line-height:20px;background:#f8f8f8;color:#111;padding-left:2.3px;white-space:nowrap;overflow:hidden">Lezárt</div>
<div class="a" style="left:351px;top:97px;width:77px;height:20px;line-height:20px;background:#f8f8f8;color:#111;padding-left:2.3px;white-space:nowrap;overflow:hidden">Van</div>
<div class="a" style="left:429px;top:97px;width:83px;height:20px;line-height:20px;background:#f8f8f8;color:#111;padding-left:2.3px;white-space:nowrap;overflow:hidden">Lezárt</div>
<div class="a" style="left:513px;top:97px;width:65px;height:20px;line-height:20px;background:#f8f8f8;color:#111;padding-left:2.3px;white-space:nowrap;overflow:hidden">Lezárt</div>
<div class="a" style="left:579px;top:97px;width:65px;height:20px;line-height:20px;background:#f8f8f8;color:#111;padding-left:2.3px;white-space:nowrap;overflow:hidden">Lezárt</div>
<div class="a" style="left:645px;top:97px;width:65px;height:20px;line-height:20px;background:#f8f8f8;color:#111;padding-left:2.3px;white-space:nowrap;overflow:hidden">2. leltár</div>
<div class="a" style="left:711px;top:97px;width:17px;height:20px;line-height:20px;background:#f8f8f8;color:#111;padding-left:2.3px;white-space:nowrap;overflow:hidden"></div>
<svg class="a" style="left:23px;top:101px" width="12" height="12" viewBox="0 0 12 12"><rect x="0.5" y="0.5" width="11" height="11" fill="#fff" stroke="#8c8c8c"/><path d="M2.600 6.200l2.200 2.800 4.600-6.600" fill="none" stroke="#222" stroke-width="1.200"/></svg>
<div class="a" style="left:2px;top:118px;width:54px;height:20px;line-height:20px;background:linear-gradient(#47961c,#6fb04c);color:#fff;padding-left:2.3px;white-space:nowrap;overflow:hidden"></div>
<div class="a" style="left:57px;top:118px;width:53px;height:20px;line-height:20px;background:linear-gradient(#47961c,#6fb04c);color:#fff;padding-left:2.3px;white-space:nowrap;overflow:hidden">010111</div>
<div class="a" style="left:111px;top:118px;width:137px;height:20px;line-height:20px;background:linear-gradient(#47961c,#6fb04c);color:#fff;padding-left:2.3px;white-space:nowrap;overflow:hidden">1S_1O_A_JOBB</div>
<div class="a" style="left:249px;top:118px;width:101px;height:20px;line-height:20px;background:linear-gradient(#47961c,#6fb04c);color:#fff;padding-left:2.3px;white-space:nowrap;overflow:hidden">Kész</div>
<div class="a" style="left:351px;top:118px;width:77px;height:20px;line-height:20px;background:linear-gradient(#47961c,#6fb04c);color:#fff;padding-left:2.3px;white-space:nowrap;overflow:hidden">Van</div>
<div class="a" style="left:429px;top:118px;width:83px;height:20px;line-height:20px;background:linear-gradient(#47961c,#6fb04c);color:#fff;padding-left:2.3px;white-space:nowrap;overflow:hidden">Kész</div>
<div class="a" style="left:513px;top:118px;width:65px;height:20px;line-height:20px;background:linear-gradient(#47961c,#6fb04c);color:#fff;padding-left:2.3px;white-space:nowrap;overflow:hidden">Kész</div>
<div class="a" style="left:579px;top:118px;width:65px;height:20px;line-height:20px;background:linear-gradient(#47961c,#6fb04c);color:#fff;padding-left:2.3px;white-space:nowrap;overflow:hidden"></div>
<div class="a" style="left:645px;top:118px;width:65px;height:20px;line-height:20px;background:linear-gradient(#47961c,#6fb04c);color:#fff;padding-left:2.3px;white-space:nowrap;overflow:hidden"></div>
<div class="a" style="left:711px;top:118px;width:17px;height:20px;line-height:20px;background:linear-gradient(#47961c,#6fb04c);color:#fff;padding-left:2.3px;white-space:nowrap;overflow:hidden"></div>
<svg class="a" style="left:23px;top:122px" width="12" height="12" viewBox="0 0 12 12"><rect x="0.5" y="0.5" width="11" height="11" fill="#fff" stroke="#8c8c8c"/><path d="M2.600 6.200l2.200 2.800 4.600-6.600" fill="none" stroke="#222" stroke-width="1.200"/></svg>
<div class="a" style="left:2px;top:139px;width:54px;height:20px;line-height:20px;background:#fff;padding-left:2.3px;white-space:nowrap;overflow:hidden"></div>
<div class="a" style="left:57px;top:139px;width:53px;height:20px;line-height:20px;background:#fff;padding-left:2.3px;white-space:nowrap;overflow:hidden"></div>
<div class="a" style="left:111px;top:139px;width:137px;height:20px;line-height:20px;background:#fff;padding-left:2.3px;white-space:nowrap;overflow:hidden"></div>
<div class="a" style="left:249px;top:139px;width:101px;height:20px;line-height:20px;background:#fff;padding-left:2.3px;white-space:nowrap;overflow:hidden"></div>
<div class="a" style="left:351px;top:139px;width:77px;height:20px;line-height:20px;background:#fff;padding-left:2.3px;white-space:nowrap;overflow:hidden"></div>
<div class="a" style="left:429px;top:139px;width:83px;height:20px;line-height:20px;background:#fff;padding-left:2.3px;white-space:nowrap;overflow:hidden"></div>
<div class="a" style="left:513px;top:139px;width:65px;height:20px;line-height:20px;background:#fff;padding-left:2.3px;white-space:nowrap;overflow:hidden"></div>
<div class="a" style="left:579px;top:139px;width:65px;height:20px;line-height:20px;background:#fff;padding-left:2.3px;white-space:nowrap;overflow:hidden"></div>
<div class="a" style="left:645px;top:139px;width:65px;height:20px;line-height:20px;background:#fff;padding-left:2.3px;white-space:nowrap;overflow:hidden"></div>
<div class="a" style="left:711px;top:139px;width:17px;height:20px;line-height:20px;background:#fff;padding-left:2.3px;white-space:nowrap;overflow:hidden"></div>
<div class="a" style="left:2px;top:160px;width:54px;height:20px;line-height:20px;background:#fff;padding-left:2.3px;white-space:nowrap;overflow:hidden"></div>
<div class="a" style="left:57px;top:160px;width:53px;height:20px;line-height:20px;background:#fff;padding-left:2.3px;white-space:nowrap;overflow:hidden"></div>
<div class="a" style="left:111px;top:160px;width:137px;height:20px;line-height:20px;background:#fff;padding-left:2.3px;white-space:nowrap;overflow:hidden"></div>
<div class="a" style="left:249px;top:160px;width:101px;height:20px;line-height:20px;background:#fff;padding-left:2.3px;white-space:nowrap;overflow:hidden"></div>
<div class="a" style="left:351px;top:160px;width:77px;height:20px;line-height:20px;background:#fff;padding-left:2.3px;white-space:nowrap;overflow:hidden"></div>
<div class="a" style="left:429px;top:160px;width:83px;height:20px;line-height:20px;background:#fff;padding-left:2.3px;white-space:nowrap;overflow:hidden"></div>
<div class="a" style="left:513px;top:160px;width:65px;height:20px;line-height:20px;background:#fff;padding-left:2.3px;white-space:nowrap;overflow:hidden"></div>
<div class="a" style="left:579px;top:160px;width:65px;height:20px;line-height:20px;background:#fff;padding-left:2.3px;white-space:nowrap;overflow:hidden"></div>
<div class="a" style="left:645px;top:160px;width:65px;height:20px;line-height:20px;background:#fff;padding-left:2.3px;white-space:nowrap;overflow:hidden"></div>
<div class="a" style="left:711px;top:160px;width:17px;height:20px;line-height:20px;background:#fff;padding-left:2.3px;white-space:nowrap;overflow:hidden"></div>
<div class="a" style="left:729px;top:55px;width:19px;height:110px;background:#e4e4e4"></div>
<svg class="a" style="left:732px;top:59.5px" width="12" height="8" viewBox="0 0 12 8"><path d="M1.500 6.500l4.500-4.500 4.500 4.500" fill="none" stroke="#bdbdbd" stroke-width="1.300"/></svg>
</div>
<div class="a" style="left:486px;top:399px;width:755px;height:328px;background:#efefef;overflow:hidden;box-shadow:inset 0 0 0 1px #4a9a1e">
<div class="a" style="left:0;top:0;width:6px;height:328px;background:#4a9a1e"></div>
<div class="pt" style="left:14px;top:4px;color:#4f9a22;font-size:15.3px">Leltár felvétel összehasonítás</div>
<div class="a" style="left:736px;top:3px;width:16.500px;height:16px;background:linear-gradient(#f1f1f1,#e7e7e7)"></div>
<svg class="a" style="left:738.6px;top:5.7px" width="11" height="11" viewBox="0 0 11 11"><path d="M1.300 1.300l8.400 8.400M9.700 1.300l-8.400 8.400" stroke="#d2411f" stroke-width="1.600" fill="none"/></svg>
<div class="a" style="left:8px;top:27.5px;width:76px;height:26px;line-height:25px;text-align:center;background:linear-gradient(#f5f5f5,#e5e5e5);color:#555;font-size:10.800px;white-space:nowrap">1. elfogadása</div>
<div class="a" style="left:86px;top:27.5px;width:76px;height:26px;line-height:25px;text-align:center;background:linear-gradient(#f5f5f5,#e5e5e5);color:#555;font-size:10.800px;white-space:nowrap">2. elfogadása</div>
<div class="a" style="left:164px;top:27.5px;width:79px;height:26px;line-height:25px;text-align:center;background:linear-gradient(#f5f5f5,#e5e5e5);color:#555;font-size:10.800px;white-space:nowrap">Új leltár kiírása</div>
<div class="a" style="left:254px;top:27.5px;width:27px;height:26px;background:linear-gradient(#f5f5f5,#e5e5e5)"></div>
<div class="a" style="left:283px;top:27.5px;width:27px;height:26px;background:linear-gradient(#f3f3f3,#eeeeee)"></div>
<svg class="a" style="left:257px;top:30px" width="21" height="21" viewBox="0 0 21 21"><rect x="0.85" y="1" width="17.200" height="1.900" fill="#b57cc9"/><path d="M1.900 3.100h15.100l-6 7v4.200l-3.400 1.700v-5.900z" fill="#48a9b1"/><rect x="15.400" y="6.200" width="4.400" height="13.800" fill="#c9d4ea"/><path d="M16 6.800h3.200v0.900h-3.200zM16 9h3.200v0.900h-3.200zM16 11.200h3.200v0.900h-3.200zM16 13.600h3.200v0.900h-3.200zM16 15.800h3.200v0.900h-3.200zM16 18h3.200v0.900h-3.200z" fill="#3668c4"/><rect x="15.400" y="6.200" width="4.400" height="1.600" fill="#666"/></svg>
<svg class="a" style="left:286.2px;top:30px" width="21" height="21" viewBox="0 0 21 21"><rect x="0.85" y="1" width="17.200" height="1.900" fill="#c4c4c4"/><path d="M1.900 3.100h15.100l-6 7v4.200l-3.400 1.700v-5.900z" fill="#cacaca"/><rect x="15.400" y="6.200" width="4.400" height="13.800" fill="#dadada"/><path d="M16 6.800h3.200v0.900h-3.200zM16 9h3.200v0.900h-3.200zM16 11.200h3.200v0.900h-3.200zM16 13.600h3.200v0.900h-3.200zM16 15.800h3.200v0.900h-3.200zM16 18h3.200v0.900h-3.200z" fill="#cccccc"/><path d="M2 1.400l16.800 16" stroke="#bdbdbd" stroke-width="2.600" stroke-linecap="round"/></svg>
<div class="a" style="left:8px;top:56px;width:727px;height:21px;background:#e9e9e9"></div>
<div class="a" style="left:8px;top:77px;width:727px;height:231px;background:#e0e0e0"></div>
<div class="a" style="left:8px;top:56px;width:78px;height:20px;line-height:20px;background:linear-gradient(#cbcbcb,#a5a5a5);padding:0 3px 0 2.300px;white-space:nowrap;overflow:hidden;color:#1a1a1a;">Cikkszám</div>
<div class="a" style="left:87px;top:56px;width:203px;height:20px;line-height:20px;background:linear-gradient(#cbcbcb,#a5a5a5);padding:0 3px 0 2.300px;white-space:nowrap;overflow:hidden;color:#1a1a1a;">Cikknév</div>
<div class="a" style="left:291px;top:56px;width:35px;height:20px;line-height:20px;background:linear-gradient(#cbcbcb,#a5a5a5);padding:0 3px 0 2.300px;white-space:nowrap;overflow:hidden;color:#1a1a1a;">Cik...</div>
<div class="a" style="left:327px;top:56px;width:119px;height:20px;line-height:20px;background:linear-gradient(#cbcbcb,#a5a5a5);padding:0 3px 0 2.300px;white-space:nowrap;overflow:hidden;color:#1a1a1a;">Cikkcsoport név</div>
<div class="a" style="left:447px;top:56px;width:83px;height:20px;line-height:20px;background:linear-gradient(#cbcbcb,#a5a5a5);padding:0 3px 0 2.300px;white-space:nowrap;overflow:hidden;color:#1a1a1a;text-align:right;">Ív menny</div>
<div class="a" style="left:531px;top:56px;width:83px;height:20px;line-height:20px;background:linear-gradient(#cbcbcb,#a5a5a5);padding:0 3px 0 2.300px;white-space:nowrap;overflow:hidden;color:#1a1a1a;text-align:right;">1. leltár</div>
<div class="a" style="left:615px;top:56px;width:83px;height:20px;line-height:20px;background:linear-gradient(#cbcbcb,#a5a5a5);padding:0 3px 0 2.300px;white-space:nowrap;overflow:hidden;color:#1a1a1a;text-align:right;">2. leltár</div>
<div class="a" style="left:699px;top:56px;width:35px;height:20px;line-height:20px;background:linear-gradient(#cbcbcb,#a5a5a5);padding:0 3px 0 2.300px;white-space:nowrap;overflow:hidden;color:#1a1a1a;"></div>
<div class="a" style="left:8px;top:77px;width:78px;height:20px;line-height:20px;background:linear-gradient(#47961c,#6fb04c);color:#fff;padding-left:3px;padding:0 3px 0 2.300px;white-space:nowrap;overflow:hidden">ALFESZ313</div>
<div class="a" style="left:87px;top:77px;width:203px;height:20px;line-height:20px;background:linear-gradient(#47961c,#6fb04c);color:#fff;letter-spacing:-0.56px;padding:0 3px 0 2.300px;white-space:nowrap;overflow:hidden">PIGMENTS SZÍNSKÁLA</div>
<div class="a" style="left:291px;top:77px;width:35px;height:20px;line-height:20px;background:linear-gradient(#47961c,#6fb04c);color:#fff;padding:0 3px 0 2.300px;white-space:nowrap;overflow:hidden">1</div>
<div class="a" style="left:327px;top:77px;width:119px;height:20px;line-height:20px;background:linear-gradient(#47961c,#6fb04c);color:#fff;padding:0 3px 0 2.300px;white-space:nowrap;overflow:hidden">Alfaparf</div>
<div class="a" style="left:447px;top:77px;width:83px;height:20px;line-height:20px;background:linear-gradient(#47961c,#6fb04c);color:#fff;text-align:right;padding:0 3px 0 2.300px;white-space:nowrap;overflow:hidden">0,00</div>
<div class="a" style="left:531px;top:77px;width:83px;height:20px;line-height:18px;background:#ffc5c5;border:1px solid #4a9a1e;color:#000;text-align:right;padding-right:5px">1,00</div>
<div class="a" style="left:615px;top:77px;width:83px;height:20px;line-height:18px;background:#ffc5c5;border:1px solid #4a9a1e;color:#000;text-align:right;padding-right:5px">0,00</div>
<div class="a" style="left:699px;top:77px;width:35px;height:20px;line-height:20px;background:linear-gradient(#47961c,#6fb04c);color:#fff;padding:0 3px 0 2.300px;white-space:nowrap;overflow:hidden"></div>
<div class="a" style="left:8px;top:98px;width:78px;height:20px;line-height:20px;background:#fff;padding:0 3px 0 2.300px;white-space:nowrap;overflow:hidden"></div>
<div class="a" style="left:87px;top:98px;width:203px;height:20px;line-height:20px;background:#fff;padding:0 3px 0 2.300px;white-space:nowrap;overflow:hidden"></div>
<div class="a" style="left:291px;top:98px;width:35px;height:20px;line-height:20px;background:#fff;padding:0 3px 0 2.300px;white-space:nowrap;overflow:hidden"></div>
<div class="a" style="left:327px;top:98px;width:119px;height:20px;line-height:20px;background:#fff;padding:0 3px 0 2.300px;white-space:nowrap;overflow:hidden"></div>
<div class="a" style="left:447px;top:98px;width:83px;height:20px;line-height:20px;background:#fff;padding:0 3px 0 2.300px;white-space:nowrap;overflow:hidden"></div>
<div class="a" style="left:531px;top:98px;width:83px;height:20px;line-height:20px;background:#fff;padding:0 3px 0 2.300px;white-space:nowrap;overflow:hidden"></div>
<div class="a" style="left:615px;top:98px;width:83px;height:20px;line-height:20px;background:#fff;padding:0 3px 0 2.300px;white-space:nowrap;overflow:hidden"></div>
<div class="a" style="left:699px;top:98px;width:35px;height:20px;line-height:20px;background:#fff;padding:0 3px 0 2.300px;white-space:nowrap;overflow:hidden"></div>
<div class="a" style="left:8px;top:119px;width:78px;height:20px;line-height:20px;background:#fff;padding:0 3px 0 2.300px;white-space:nowrap;overflow:hidden"></div>
<div class="a" style="left:87px;top:119px;width:203px;height:20px;line-height:20px;background:#fff;padding:0 3px 0 2.300px;white-space:nowrap;overflow:hidden"></div>
<div class="a" style="left:291px;top:119px;width:35px;height:20px;line-height:20px;background:#fff;padding:0 3px 0 2.300px;white-space:nowrap;overflow:hidden"></div>
<div class="a" style="left:327px;top:119px;width:119px;height:20px;line-height:20px;background:#fff;padding:0 3px 0 2.300px;white-space:nowrap;overflow:hidden"></div>
<div class="a" style="left:447px;top:119px;width:83px;height:20px;line-height:20px;background:#fff;padding:0 3px 0 2.300px;white-space:nowrap;overflow:hidden"></div>
<div class="a" style="left:531px;top:119px;width:83px;height:20px;line-height:20px;background:#fff;padding:0 3px 0 2.300px;white-space:nowrap;overflow:hidden"></div>
<div class="a" style="left:615px;top:119px;width:83px;height:20px;line-height:20px;background:#fff;padding:0 3px 0 2.300px;white-space:nowrap;overflow:hidden"></div>
<div class="a" style="left:699px;top:119px;width:35px;height:20px;line-height:20px;background:#fff;padding:0 3px 0 2.300px;white-space:nowrap;overflow:hidden"></div>
<div class="a" style="left:8px;top:140px;width:78px;height:20px;line-height:20px;background:#fff;padding:0 3px 0 2.300px;white-space:nowrap;overflow:hidden"></div>
<div class="a" style="left:87px;top:140px;width:203px;height:20px;line-height:20px;background:#fff;padding:0 3px 0 2.300px;white-space:nowrap;overflow:hidden"></div>
<div class="a" style="left:291px;top:140px;width:35px;height:20px;line-height:20px;background:#fff;padding:0 3px 0 2.300px;white-space:nowrap;overflow:hidden"></div>
<div class="a" style="left:327px;top:140px;width:119px;height:20px;line-height:20px;background:#fff;padding:0 3px 0 2.300px;white-space:nowrap;overflow:hidden"></div>
<div class="a" style="left:447px;top:140px;width:83px;height:20px;line-height:20px;background:#fff;padding:0 3px 0 2.300px;white-space:nowrap;overflow:hidden"></div>
<div class="a" style="left:531px;top:140px;width:83px;height:20px;line-height:20px;background:#fff;padding:0 3px 0 2.300px;white-space:nowrap;overflow:hidden"></div>
<div class="a" style="left:615px;top:140px;width:83px;height:20px;line-height:20px;background:#fff;padding:0 3px 0 2.300px;white-space:nowrap;overflow:hidden"></div>
<div class="a" style="left:699px;top:140px;width:35px;height:20px;line-height:20px;background:#fff;padding:0 3px 0 2.300px;white-space:nowrap;overflow:hidden"></div>
<div class="a" style="left:8px;top:161px;width:78px;height:20px;line-height:20px;background:#fff;padding:0 3px 0 2.300px;white-space:nowrap;overflow:hidden"></div>
<div class="a" style="left:87px;top:161px;width:203px;height:20px;line-height:20px;background:#fff;padding:0 3px 0 2.300px;white-space:nowrap;overflow:hidden"></div>
<div class="a" style="left:291px;top:161px;width:35px;height:20px;line-height:20px;background:#fff;padding:0 3px 0 2.300px;white-space:nowrap;overflow:hidden"></div>
<div class="a" style="left:327px;top:161px;width:119px;height:20px;line-height:20px;background:#fff;padding:0 3px 0 2.300px;white-space:nowrap;overflow:hidden"></div>
<div class="a" style="left:447px;top:161px;width:83px;height:20px;line-height:20px;background:#fff;padding:0 3px 0 2.300px;white-space:nowrap;overflow:hidden"></div>
<div class="a" style="left:531px;top:161px;width:83px;height:20px;line-height:20px;background:#fff;padding:0 3px 0 2.300px;white-space:nowrap;overflow:hidden"></div>
<div class="a" style="left:615px;top:161px;width:83px;height:20px;line-height:20px;background:#fff;padding:0 3px 0 2.300px;white-space:nowrap;overflow:hidden"></div>
<div class="a" style="left:699px;top:161px;width:35px;height:20px;line-height:20px;background:#fff;padding:0 3px 0 2.300px;white-space:nowrap;overflow:hidden"></div>
<div class="a" style="left:8px;top:182px;width:78px;height:20px;line-height:20px;background:#fff;padding:0 3px 0 2.300px;white-space:nowrap;overflow:hidden"></div>
<div class="a" style="left:87px;top:182px;width:203px;height:20px;line-height:20px;background:#fff;padding:0 3px 0 2.300px;white-space:nowrap;overflow:hidden"></div>
<div class="a" style="left:291px;top:182px;width:35px;height:20px;line-height:20px;background:#fff;padding:0 3px 0 2.300px;white-space:nowrap;overflow:hidden"></div>
<div class="a" style="left:327px;top:182px;width:119px;height:20px;line-height:20px;background:#fff;padding:0 3px 0 2.300px;white-space:nowrap;overflow:hidden"></div>
<div class="a" style="left:447px;top:182px;width:83px;height:20px;line-height:20px;background:#fff;padding:0 3px 0 2.300px;white-space:nowrap;overflow:hidden"></div>
<div class="a" style="left:531px;top:182px;width:83px;height:20px;line-height:20px;background:#fff;padding:0 3px 0 2.300px;white-space:nowrap;overflow:hidden"></div>
<div class="a" style="left:615px;top:182px;width:83px;height:20px;line-height:20px;background:#fff;padding:0 3px 0 2.300px;white-space:nowrap;overflow:hidden"></div>
<div class="a" style="left:699px;top:182px;width:35px;height:20px;line-height:20px;background:#fff;padding:0 3px 0 2.300px;white-space:nowrap;overflow:hidden"></div>
<div class="a" style="left:8px;top:203px;width:78px;height:20px;line-height:20px;background:#fff;padding:0 3px 0 2.300px;white-space:nowrap;overflow:hidden"></div>
<div class="a" style="left:87px;top:203px;width:203px;height:20px;line-height:20px;background:#fff;padding:0 3px 0 2.300px;white-space:nowrap;overflow:hidden"></div>
<div class="a" style="left:291px;top:203px;width:35px;height:20px;line-height:20px;background:#fff;padding:0 3px 0 2.300px;white-space:nowrap;overflow:hidden"></div>
<div class="a" style="left:327px;top:203px;width:119px;height:20px;line-height:20px;background:#fff;padding:0 3px 0 2.300px;white-space:nowrap;overflow:hidden"></div>
<div class="a" style="left:447px;top:203px;width:83px;height:20px;line-height:20px;background:#fff;padding:0 3px 0 2.300px;white-space:nowrap;overflow:hidden"></div>
<div class="a" style="left:531px;top:203px;width:83px;height:20px;line-height:20px;background:#fff;padding:0 3px 0 2.300px;white-space:nowrap;overflow:hidden"></div>
<div class="a" style="left:615px;top:203px;width:83px;height:20px;line-height:20px;background:#fff;padding:0 3px 0 2.300px;white-space:nowrap;overflow:hidden"></div>
<div class="a" style="left:699px;top:203px;width:35px;height:20px;line-height:20px;background:#fff;padding:0 3px 0 2.300px;white-space:nowrap;overflow:hidden"></div>
<div class="a" style="left:8px;top:224px;width:78px;height:20px;line-height:20px;background:#fff;padding:0 3px 0 2.300px;white-space:nowrap;overflow:hidden"></div>
<div class="a" style="left:87px;top:224px;width:203px;height:20px;line-height:20px;background:#fff;padding:0 3px 0 2.300px;white-space:nowrap;overflow:hidden"></div>
<div class="a" style="left:291px;top:224px;width:35px;height:20px;line-height:20px;background:#fff;padding:0 3px 0 2.300px;white-space:nowrap;overflow:hidden"></div>
<div class="a" style="left:327px;top:224px;width:119px;height:20px;line-height:20px;background:#fff;padding:0 3px 0 2.300px;white-space:nowrap;overflow:hidden"></div>
<div class="a" style="left:447px;top:224px;width:83px;height:20px;line-height:20px;background:#fff;padding:0 3px 0 2.300px;white-space:nowrap;overflow:hidden"></div>
<div class="a" style="left:531px;top:224px;width:83px;height:20px;line-height:20px;background:#fff;padding:0 3px 0 2.300px;white-space:nowrap;overflow:hidden"></div>
<div class="a" style="left:615px;top:224px;width:83px;height:20px;line-height:20px;background:#fff;padding:0 3px 0 2.300px;white-space:nowrap;overflow:hidden"></div>
<div class="a" style="left:699px;top:224px;width:35px;height:20px;line-height:20px;background:#fff;padding:0 3px 0 2.300px;white-space:nowrap;overflow:hidden"></div>
<div class="a" style="left:8px;top:245px;width:78px;height:20px;line-height:20px;background:#fff;padding:0 3px 0 2.300px;white-space:nowrap;overflow:hidden"></div>
<div class="a" style="left:87px;top:245px;width:203px;height:20px;line-height:20px;background:#fff;padding:0 3px 0 2.300px;white-space:nowrap;overflow:hidden"></div>
<div class="a" style="left:291px;top:245px;width:35px;height:20px;line-height:20px;background:#fff;padding:0 3px 0 2.300px;white-space:nowrap;overflow:hidden"></div>
<div class="a" style="left:327px;top:245px;width:119px;height:20px;line-height:20px;background:#fff;padding:0 3px 0 2.300px;white-space:nowrap;overflow:hidden"></div>
<div class="a" style="left:447px;top:245px;width:83px;height:20px;line-height:20px;background:#fff;padding:0 3px 0 2.300px;white-space:nowrap;overflow:hidden"></div>
<div class="a" style="left:531px;top:245px;width:83px;height:20px;line-height:20px;background:#fff;padding:0 3px 0 2.300px;white-space:nowrap;overflow:hidden"></div>
<div class="a" style="left:615px;top:245px;width:83px;height:20px;line-height:20px;background:#fff;padding:0 3px 0 2.300px;white-space:nowrap;overflow:hidden"></div>
<div class="a" style="left:699px;top:245px;width:35px;height:20px;line-height:20px;background:#fff;padding:0 3px 0 2.300px;white-space:nowrap;overflow:hidden"></div>
<div class="a" style="left:8px;top:266px;width:78px;height:20px;line-height:20px;background:#fff;padding:0 3px 0 2.300px;white-space:nowrap;overflow:hidden"></div>
<div class="a" style="left:87px;top:266px;width:203px;height:20px;line-height:20px;background:#fff;padding:0 3px 0 2.300px;white-space:nowrap;overflow:hidden"></div>
<div class="a" style="left:291px;top:266px;width:35px;height:20px;line-height:20px;background:#fff;padding:0 3px 0 2.300px;white-space:nowrap;overflow:hidden"></div>
<div class="a" style="left:327px;top:266px;width:119px;height:20px;line-height:20px;background:#fff;padding:0 3px 0 2.300px;white-space:nowrap;overflow:hidden"></div>
<div class="a" style="left:447px;top:266px;width:83px;height:20px;line-height:20px;background:#fff;padding:0 3px 0 2.300px;white-space:nowrap;overflow:hidden"></div>
<div class="a" style="left:531px;top:266px;width:83px;height:20px;line-height:20px;background:#fff;padding:0 3px 0 2.300px;white-space:nowrap;overflow:hidden"></div>
<div class="a" style="left:615px;top:266px;width:83px;height:20px;line-height:20px;background:#fff;padding:0 3px 0 2.300px;white-space:nowrap;overflow:hidden"></div>
<div class="a" style="left:699px;top:266px;width:35px;height:20px;line-height:20px;background:#fff;padding:0 3px 0 2.300px;white-space:nowrap;overflow:hidden"></div>
<div class="a" style="left:8px;top:287px;width:78px;height:20px;line-height:20px;background:#fff;padding:0 3px 0 2.300px;white-space:nowrap;overflow:hidden"></div>
<div class="a" style="left:87px;top:287px;width:203px;height:20px;line-height:20px;background:#fff;padding:0 3px 0 2.300px;white-space:nowrap;overflow:hidden"></div>
<div class="a" style="left:291px;top:287px;width:35px;height:20px;line-height:20px;background:#fff;padding:0 3px 0 2.300px;white-space:nowrap;overflow:hidden"></div>
<div class="a" style="left:327px;top:287px;width:119px;height:20px;line-height:20px;background:#fff;padding:0 3px 0 2.300px;white-space:nowrap;overflow:hidden"></div>
<div class="a" style="left:447px;top:287px;width:83px;height:20px;line-height:20px;background:#fff;padding:0 3px 0 2.300px;white-space:nowrap;overflow:hidden"></div>
<div class="a" style="left:531px;top:287px;width:83px;height:20px;line-height:20px;background:#fff;padding:0 3px 0 2.300px;white-space:nowrap;overflow:hidden"></div>
<div class="a" style="left:615px;top:287px;width:83px;height:20px;line-height:20px;background:#fff;padding:0 3px 0 2.300px;white-space:nowrap;overflow:hidden"></div>
<div class="a" style="left:699px;top:287px;width:35px;height:20px;line-height:20px;background:#fff;padding:0 3px 0 2.300px;white-space:nowrap;overflow:hidden"></div>
<div class="a" style="left:8px;top:307.5px;width:746px;height:20px;background:#e0e0e0"></div>
<div class="a" style="left:8px;top:309.2px;width:16px;height:16px;background:#ededed"></div>
<svg class="a" style="left:12px;top:311.2px" width="8" height="12" viewBox="0 0 8 12"><path d="M6 1.500l-4.500 4.500 4.500 4.500" fill="none" stroke="#a6a6a6" stroke-width="1.300"/></svg>
<div class="a" style="left:718px;top:309.2px;width:16px;height:16px;background:#ededed"></div>
<svg class="a" style="left:722px;top:311.2px" width="8" height="12" viewBox="0 0 8 12"><path d="M1.500 1.500l4.500 4.500-4.500 4.500" fill="none" stroke="#a6a6a6" stroke-width="1.300"/></svg>
<div class="a" style="left:735.8px;top:309.2px;width:16.200px;height:16px;background:linear-gradient(#f5f5f5,#e3e3e3)"></div>
<svg class="a" style="left:739px;top:312.3px" width="11" height="10" viewBox="0 0 12 11"><path d="M1.500 6l3 3.500 6-8" fill="none" stroke="#3aa87c" stroke-width="1.800"/></svg>
<div class="a" style="left:735px;top:56px;width:19.500px;height:251.500px;background:#e5e5e5"></div>
<svg class="a" style="left:738px;top:60.5px" width="12" height="8" viewBox="0 0 12 8"><path d="M1.500 6.500l4.500-4.500 4.500 4.500" fill="none" stroke="#adadad" stroke-width="1.300"/></svg>
<div class="a" style="left:735.8px;top:291px;width:16.200px;height:15.800px;background:#ededed"></div>
<svg class="a" style="left:738px;top:295px" width="12" height="8" viewBox="0 0 12 8"><path d="M1.500 1.500l4.500 4.500 4.500-4.500" fill="none" stroke="#adadad" stroke-width="1.300"/></svg>
<div class="a" style="left:0;top:0;width:755px;height:1px;background:#4a9a1e"></div>
<div class="a" style="left:753.700px;top:0;width:1.300px;height:328px;background:#4a9a1e"></div>
<div class="a" style="left:0;top:326.600px;width:755px;height:1.400px;background:#4a9a1e"></div>
</div>
<div class="a" style="left:12px;top:75px;width:151px;height:68px;background:#2f2f2f;border:1px solid #4a9a1e;overflow:hidden">
<div class="a" style="left:-1px;top:-1px;width:6px;height:68px;background:#4a9a1e"></div>
<div class="pt" style="left:13.500px;top:2.800px;color:#fff;font-size:15.500px">Leltárkezelés</div>
<div class="x" style="left:134.500px;top:5.500px;color:#fff"></div>
<div class="a" style="left:5px;top:25.700px;width:145px;height:20.300px;line-height:20px;font-size:10.800px;background:linear-gradient(#468f1c,#4f9c22);color:#fff;padding-left:18.300px;white-space:nowrap">Leltárbizonylat</div>
<div class="a" style="left:5px;top:46px;width:145px;height:20px;line-height:20px;font-size:10.800px;color:#fff;padding-left:18.300px;white-space:nowrap">Paraméter<span class="a" style="right:4px;top:7.200px;width:4.200px;height:5.800px;background:#fff;clip-path:polygon(0 0,100% 50%,0 100%)"></span></div>
</div>
<div class="a" style="left:0;top:773.700px;width:1540px;height:25.300px;background:linear-gradient(#f4f4f4,#e8e8e8)">
<svg class="a" style="left:8.700px;top:4.300px" width="18" height="16" viewBox="0 0 18 16"><g fill="#3d7cc4"><rect x="0" y="0.500" width="17.500" height="2.600" rx="1"/><rect x="0" y="6.400" width="17.500" height="2.600" rx="1"/><rect x="0" y="12.300" width="17.500" height="2.600" rx="1"/></g></svg>
<div class="a" style="left:35px;top:1.300px;width:110px;height:22.500px;line-height:21.500px;background:#a9ce96;color:#6e6e6e;font-size:11px;white-space:nowrap;padding-left:6px">Leltár szűrés bevitel</div>
<svg class="a" style="left:1443px;top:0" width="24" height="25" viewBox="0 0 24 25"><path d="M10.200 5.400l-7.400 7.400 7.400 7.400M17.500 5.400l-7.400 7.400 7.400 7.400" fill="none" stroke="#b9b9b9" stroke-width="2.800" stroke-linecap="round" stroke-linejoin="round"/></svg>
<svg class="a" style="left:1476px;top:0" width="24" height="25" viewBox="0 0 24 25"><path d="M4.800 5.400l7.400 7.400-7.400 7.400M12.100 5.400l7.400 7.400-7.400 7.400" fill="none" stroke="#b9b9b9" stroke-width="2.800" stroke-linecap="round" stroke-linejoin="round"/></svg>
<div class="a" style="left:1505.500px;top:1.500px;width:35px;height:23px;background:linear-gradient(#f7f7f7,#efefef)"></div>
<svg class="a" style="left:1514px;top:3px" width="16" height="20" viewBox="0 0 16 20"><rect x="1.700" y="1.500" width="11.600" height="17.200" fill="#f6f6f6" stroke="#3aa4ac" stroke-width="1.500"/><path d="M1 1.600h13" stroke="#3aa4ac" stroke-width="1.800"/><path d="M1.700 4.600h11.600" stroke="#3aa4ac" stroke-width="1.400"/><path d="M2.500 3.100h10" stroke="#f6f6f6" stroke-width="0.900"/><path d="M4.500 8.300h6M4.500 11.600h6M4.500 14.900h6" stroke="#3aa4ac" stroke-width="1.500" stroke-linecap="round"/></svg>
</div>
</div></div>
</body></html>
